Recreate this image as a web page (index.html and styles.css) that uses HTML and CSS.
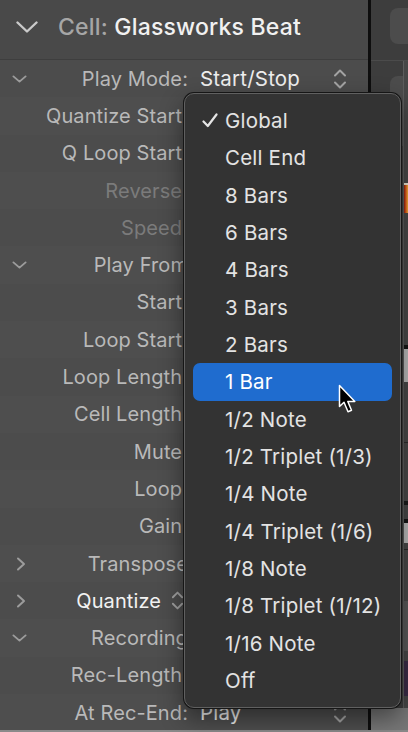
FILE: index.html
```html
<!DOCTYPE html>
<html lang="en">
<head>
<meta charset="utf-8">
<title>Cell Inspector</title>
<link rel="stylesheet" href="styles.css">
</head>
<body>
<svg class="defs" aria-hidden="true">
  <symbol id="chev-down" viewBox="0 0 16 8"><path d="M1.5 1.2 L8 6.8 L14.5 1.2" fill="none" stroke="currentColor" stroke-width="2" stroke-linecap="round" stroke-linejoin="round"/></symbol>
  <symbol id="chev-right" viewBox="0 0 10 14"><path d="M2 1.5 L8 7 L2 12.5" fill="none" stroke="currentColor" stroke-width="2" stroke-linecap="round" stroke-linejoin="round"/></symbol>
  <symbol id="updown" viewBox="0 0 14 22"><path d="M2 7.5 L7 2.5 L12 7.5 M2 14.5 L7 19.5 L12 14.5" fill="none" stroke="currentColor" stroke-width="2" stroke-linecap="round" stroke-linejoin="round"/></symbol>
</svg>

<div class="app">
  <aside class="inspector">
    <header class="cell-head">
      <svg class="head-chevron" viewBox="0 0 22 12"><path d="M1.5 1.5 L11 10.5 L20.5 1.5" fill="none" stroke="currentColor" stroke-width="2.4" stroke-linecap="round" stroke-linejoin="round"/></svg>
      <h1 class="cell-title"><span class="cell-kind">Cell:</span> Glassworks Beat</h1>
    </header>
    <ul class="params">
      <li class="param"><svg class="disc-down"><use href="#chev-down"/></svg><span class="label">Play Mode:</span><span class="value">Start/Stop</span><svg class="stepper"><use href="#updown"/></svg></li>
      <li class="param"><span class="label">Quantize Start:</span></li>
      <li class="param"><span class="label">Q Loop Start:</span></li>
      <li class="param"><span class="label dim">Reverse:</span></li>
      <li class="param"><span class="label dim">Speed:</span></li>
      <li class="param"><svg class="disc-down"><use href="#chev-down"/></svg><span class="label">Play From</span></li>
      <li class="param"><span class="label">Start:</span></li>
      <li class="param"><span class="label">Loop Start:</span></li>
      <li class="param"><span class="label">Loop Length:</span></li>
      <li class="param"><span class="label">Cell Length:</span></li>
      <li class="param"><span class="label">Mute:</span></li>
      <li class="param"><span class="label">Loop:</span></li>
      <li class="param"><span class="label">Gain:</span></li>
      <li class="param"><svg class="disc-right"><use href="#chev-right"/></svg><span class="label">Transpose</span></li>
      <li class="param"><svg class="disc-right"><use href="#chev-right"/></svg><span class="label bright">Quantize<svg class="mini-stepper"><use href="#updown"/></svg></span></li>
      <li class="param"><svg class="disc-down"><use href="#chev-down"/></svg><span class="label">Recording</span></li>
      <li class="param"><span class="label">Rec-Length:</span></li>
      <li class="param"><span class="label">At Rec-End:</span><span class="value">Play</span><svg class="stepper"><use href="#updown"/></svg></li>
    </ul>
  </aside>

  <div class="divider"></div>

  <section class="grid">
    <div class="grid-head"><div class="slot"></div></div>
    <div class="grid-body">
      <div class="lane"><div class="slot tall"></div></div>
      <div class="clips">
        <div class="clip wave"></div>
        <div class="clip thumb"></div>
        <div class="clip rule"></div>
        <div class="clip mark"></div>
        <div class="clip thumb short"></div>
        <div class="clip rule"></div>
        <div class="clip lit"></div>
        <div class="clip purple"></div>
      </div>
    </div>
    <div class="grid-foot"></div>
  </section>
</div>

<ul class="menu">
  <li class="menu-item"><svg class="check" viewBox="0 0 16 15"><path d="M1.5 8.5 L5.8 13 L14.5 1.5" fill="none" stroke="currentColor" stroke-width="2.2" stroke-linecap="round" stroke-linejoin="round"/></svg><span>Global</span></li>
  <li class="menu-item"><span>Cell End</span></li>
  <li class="menu-item"><span>8 Bars</span></li>
  <li class="menu-item"><span>6 Bars</span></li>
  <li class="menu-item"><span>4 Bars</span></li>
  <li class="menu-item"><span>3 Bars</span></li>
  <li class="menu-item"><span>2 Bars</span></li>
  <li class="menu-item selected"><span>1 Bar</span></li>
  <li class="menu-item"><span>1/2 Note</span></li>
  <li class="menu-item"><span>1/2 Triplet (1/3)</span></li>
  <li class="menu-item"><span>1/4 Note</span></li>
  <li class="menu-item"><span>1/4 Triplet (1/6)</span></li>
  <li class="menu-item"><span>1/8 Note</span></li>
  <li class="menu-item"><span>1/8 Triplet (1/12)</span></li>
  <li class="menu-item"><span>1/16 Note</span></li>
  <li class="menu-item"><span>Off</span></li>
</ul>

<svg class="cursor" viewBox="0 0 19 30"><path d="M1.5 1.5 L1.5 22.5 L6 18.3 L10 27.8 L13.5 26.3 L9.8 17.5 L16.8 17.5 Z" fill="#000" stroke="#fff" stroke-width="1.5" stroke-linejoin="round"/></svg>
</body>
</html>
```

FILE: styles.css
```css
* {
  box-sizing: border-box;
  margin: 0;
  padding: 0;
}

html, body {
  width: 408px;
  height: 732px;
  overflow: hidden;
}

body {
  position: relative;
  background: #8a8a8a;
  font-family: Inter, "Noto Sans", sans-serif;
  -webkit-font-smoothing: antialiased;
}

.defs {
  position: absolute;
  width: 0;
  height: 0;
}

.app {
  display: flex;
  height: 730px;
}

/* ---------- inspector ---------- */
.inspector {
  width: 368px;
  flex: none;
  display: flex;
  flex-direction: column;
  background: #4b4b4b;
  overflow: hidden;
}

.cell-head {
  height: 60px;
  flex: none;
  display: flex;
  align-items: center;
  padding: 0 0 6px 16px;
  background: #494949;
  border-bottom: 1px solid #3e3e3e;
}

.head-chevron {
  width: 22px;
  height: 12px;
  margin-right: 20px;
  color: #cacaca;
}

.cell-title {
  font-size: 23px;
  font-weight: 500;
  color: #f1f1f1;
  letter-spacing: 0.2px;
}

.cell-kind {
  color: #a6a6a6;
}

.params {
  list-style: none;
}

.param {
  height: 37.3px;
  display: grid;
  grid-template-columns: 40px 148px 12px 133px 14px;
  align-items: center;
  font-size: 20.5px;
  letter-spacing: 0.2px;
  color: #b9b9b9;
  background: #4c4c4c;
}

.param:nth-child(even) {
  background: #4e4e4e;
}

.disc-down {
  grid-column: 1;
  width: 15px;
  height: 8px;
  margin-left: 12px;
  color: #9c9c9c;
}

.disc-right {
  grid-column: 1;
  width: 10px;
  height: 14px;
  margin-left: 16px;
  color: #9c9c9c;
}

.label {
  grid-column: 2;
  display: flex;
  align-items: center;
  justify-content: flex-end;
  white-space: nowrap;
  font-size: 20px;
  letter-spacing: 0.1px;
}

.label.dim {
  color: #7b7b7b;
}

.label.bright {
  color: #f2f2f2;
}

.mini-stepper {
  width: 13px;
  height: 21px;
  margin: 0 4px 0 10px;
  color: #a0a0a0;
  flex: none;
}

.value {
  grid-column: 4;
  color: #eeeeee;
  white-space: nowrap;
}

.stepper {
  grid-column: 5;
  width: 14px;
  height: 22px;
  color: #a3a3a3;
}

/* ---------- divider and cell grid ---------- */
.divider {
  width: 3px;
  flex: none;
  background: #0e0e0e;
}

.grid {
  flex: 1;
  display: flex;
  flex-direction: column;
  background: #3d3d3d;
}

.grid-head {
  height: 61px;
  flex: none;
  padding: 8px 0 0 19px;
  border-bottom: 1px solid #4b4b4b;
}

.slot {
  height: 36px;
  background: #4c4c4c;
  border-radius: 8px 0 0 8px;
}

.grid-body {
  flex: 1;
  display: flex;
}

.lane {
  flex: 1;
  padding: 15px 0 0 19px;
}

.slot.tall {
  height: 70px;
}

.clips {
  width: 5px;
  flex: none;
  display: flex;
  flex-direction: column;
  background: #474747;
  border-left: 1px solid #5c5c5c;
}

.clip.wave {
  height: 30px;
  margin-top: 122px;
  border-top: 2px solid #e8e0d0;
  background: linear-gradient(to right, #8e1c10, #e2601c 50%, #f4b43a);
}

.clip.thumb {
  height: 37px;
  margin-top: 132px;
  border-top: 4px solid #151515;
  background: #b8b8b8;
}

.clip.thumb.short {
  height: 24px;
  margin-top: 14px;
}

.clip.rule {
  height: 1px;
  margin-top: 60px;
  background: #2a2a2a;
}

.clip.thumb.short + .clip.rule {
  margin-top: 6px;
}

.clip.mark {
  height: 4px;
  margin-top: 58px;
  background: #1a1a1a;
}

.clip.lit {
  height: 50px;
  margin-top: 51px;
  background: #585858;
}

.clip.purple {
  height: 35px;
  margin-top: 10px;
  background: #3a2c46;
}

.grid-foot {
  height: 22px;
  flex: none;
  background: #777777;
}

/* ---------- popup menu ---------- */
.menu {
  position: absolute;
  left: 184px;
  top: 93px;
  width: 217px;
  height: 615px;
  padding: 8px;
  list-style: none;
  background: #333333;
  border: 1px solid #606060;
  border-radius: 10px;
  box-shadow: 0 0 0 1px #161616, 0 10px 24px rgba(0, 0, 0, 0.45);
}

.menu-item {
  height: 37.33px;
  display: grid;
  grid-template-columns: 32px 1fr;
  align-items: center;
  font-size: 20.5px;
  letter-spacing: 0.2px;
  color: #e3e3e3;
  border-radius: 7px;
  white-space: nowrap;
}

.menu-item span {
  grid-column: 2;
}

.check {
  grid-column: 1;
  width: 16px;
  height: 15px;
  margin-left: 9px;
  color: #e6e6e6;
}

.menu-item.selected {
  background: #1f6ccf;
  color: #ffffff;
}

/* pointer over the popup */
.cursor {
  position: absolute;
  left: 338px;
  top: 383.5px;
  width: 19px;
  height: 30px;
}
```
